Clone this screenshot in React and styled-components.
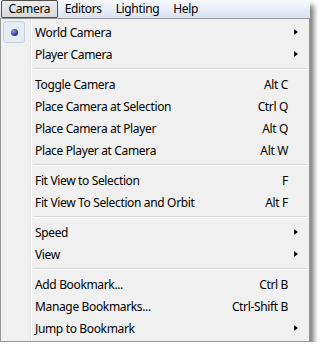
import React from "react";
import styled, {createGlobalStyle} from "styled-components";

const GlobalStyle = createGlobalStyle`
  html, body {
    margin: 0;
    padding: 0;
    background: #ffffff;
  }
  body {
    font-family: "Noto Sans", "Open Sans", sans-serif;
    font-size: 12px;
    letter-spacing: -0.35px;
    color: #000;
  }
`;

const Window = styled.div`
  width: 310px;
  display: flex;
  flex-direction: column;
  box-shadow: 4px 5px 5px rgba(0, 0, 0, 0.5);
`;

const MenuBar = styled.div`
  display: flex;
  align-items: stretch;
  height: 18px;
  padding-left: 1px;
  background: linear-gradient(to bottom, #f7f9fd 0%, #e9eef8 50%, #d9e1f2 100%);
`;

const MenuTitle = styled.div`
  display: flex;
  align-items: center;
  padding: 0 ${p => p.$pad || 6}px 1px;
  border: 1px solid ${p => (p.$active ? "#4e4e4e" : "transparent")};
  border-radius: 2px;
  background: ${p => (p.$active ? "linear-gradient(to bottom, #ececec, #d9d9d9)" : "transparent")};
  line-height: 1;
`;

const Dropdown = styled.div`
  border: 1px solid #979797;
  padding: 2px;
  background:
    linear-gradient(to right,
      transparent 29px, #e2e3e3 29px, #e2e3e3 30px,
      #ffffff 30px, #ffffff 31px, transparent 31px),
    #f0f0f0;
`;

const Item = styled.div`
  display: grid;
  grid-template-columns: 32px 1fr auto 19px;
  align-items: center;
  height: 22px;
`;

const Gutter = styled.div`
  display: flex;
  align-items: center;
  height: 100%;
`;

const CheckBox = styled.div`
  box-sizing: border-box;
  width: 22px;
  height: 22px;
  display: flex;
  align-items: center;
  justify-content: center;
  border: 1px solid #c6cfe2;
  border-radius: 3px;
  background: #e7ebf4;
`;

const Bullet = styled.span`
  width: 7px;
  height: 7px;
  border-radius: 50%;
  background: radial-gradient(circle at 35% 35%, #9a9ae0 0%, #3c3ca8 55%, #1e1e70 100%);
`;

const Label = styled.span`
  white-space: nowrap;
`;

const Shortcut = styled.span`
  white-space: nowrap;
  text-align: right;
`;

const Arrow = styled.span`
  justify-self: start;
  margin-left: 6px;
  width: 0;
  height: 0;
  border-top: 3.5px solid transparent;
  border-bottom: 3.5px solid transparent;
  border-left: 4px solid ${p => (p.$show ? "#000" : "transparent")};
`;

const Separator = styled.div`
  height: 8px;
  display: flex;
  flex-direction: column;
  justify-content: center;
  margin-left: 30px;

  &::before {
    content: "";
    display: block;
    height: 1px;
    background: #d7d7d7;
  }
  &::after {
    content: "";
    display: block;
    height: 1px;
    background: #ffffff;
  }
`;

const groups = [
  [
    {label: "World Camera", sub: true, checked: true},
    {label: "Player Camera", sub: true},
  ],
  [
    {label: "Toggle Camera", key: "Alt C"},
    {label: "Place Camera at Selection", key: "Ctrl Q"},
    {label: "Place Camera at Player", key: "Alt Q"},
    {label: "Place Player at Camera", key: "Alt W"},
  ],
  [
    {label: "Fit View to Selection", key: "F"},
    {label: "Fit View To Selection and Orbit", key: "Alt F"},
  ],
  [
    {label: "Speed", sub: true},
    {label: "View", sub: true},
  ],
  [
    {label: "Add Bookmark...", key: "Ctrl B"},
    {label: "Manage Bookmarks...", key: "Ctrl-Shift B"},
    {label: "Jump to Bookmark", sub: true},
  ],
];

const App = () => {
  return (
    <>
      <GlobalStyle/>
      <Window>
        <MenuBar>
          <MenuTitle $active $pad={6.5}>Camera</MenuTitle>
          <MenuTitle>Editors</MenuTitle>
          <MenuTitle>Lighting</MenuTitle>
          <MenuTitle>Help</MenuTitle>
        </MenuBar>
        <Dropdown>
          {groups.map((group, gi) => (
            <React.Fragment key={gi}>
              {gi > 0 && <Separator/>}
              {group.map(item => (
                <Item key={item.label}>
                  <Gutter>
                    {item.checked && (
                      <CheckBox><Bullet/></CheckBox>
                    )}
                  </Gutter>
                  <Label>{item.label}</Label>
                  <Shortcut>{item.key}</Shortcut>
                  <Arrow $show={item.sub}/>
                </Item>
              ))}
            </React.Fragment>
          ))}
        </Dropdown>
      </Window>
    </>
  );
};

export default App;
